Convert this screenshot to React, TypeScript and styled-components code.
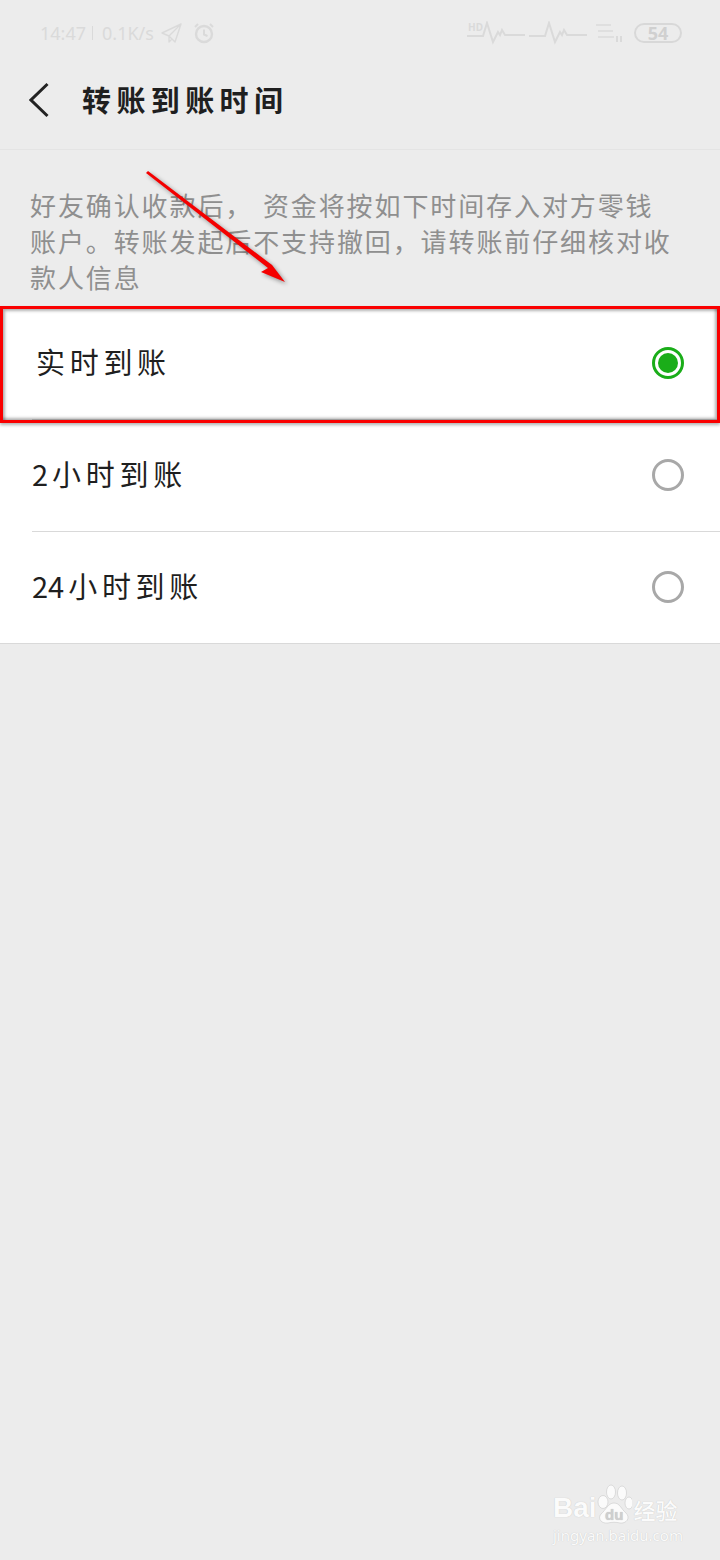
import React from 'react';
import styled, { createGlobalStyle } from 'styled-components';

const GlobalStyle = createGlobalStyle`
  html, body {
    margin: 0;
    padding: 0;
    background: #ececec;
  }
`;

const Page = styled.div`
  position: relative;
  width: 720px;
  height: 1560px;
  overflow: hidden;
  background: #ececec;
  font-family: "Noto Sans CJK SC", "Noto Sans", sans-serif;
`;

const StatusBar = styled.div`
  height: 66px;
  box-sizing: border-box;
  padding: 0 38px 0 40px;
  display: flex;
  align-items: center;
  justify-content: space-between;
  color: #dadada;
  font-family: "Noto Sans", sans-serif;
  font-size: 18px;
`;

const StatusGroup = styled.div`
  display: flex;
  align-items: center;
`;

const StatusText = styled.span`
  white-space: pre;
`;

const StatusSeparator = styled.span`
  width: 1px;
  height: 14px;
  margin: 0 9px 0 6px;
  background: #dadada;
`;

const IconSlot = styled.svg<{ $gap?: number; $start?: number }>`
  display: block;
  margin-left: ${(p) => p.$start ?? 0}px;
  margin-right: ${(p) => p.$gap ?? 0}px;
  fill: none;
  stroke: #dadada;
  stroke-width: 2;
`;

const Battery = styled.div`
  width: 48px;
  height: 20px;
  box-sizing: border-box;
  margin-left: 9px;
  border: 2px solid #d8d8d8;
  border-radius: 10px;
  display: flex;
  align-items: center;
  justify-content: center;
  color: #d0d0d0;
  font-size: 18px;
  font-weight: 700;
  line-height: 1;
`;

const Header = styled.div`
  height: 84px;
  box-sizing: border-box;
  display: flex;
  align-items: center;
  padding: 0 0 16px 29px;
  border-bottom: 1px solid #e4e4e4;
`;

const Title = styled.h1`
  margin: 0 0 2px 33px;
  font-size: 29px;
  font-weight: 700;
  letter-spacing: 5.4px;
  line-height: 36px;
  color: #1f1f1f;
`;

const Description = styled.p`
  height: 157px;
  box-sizing: border-box;
  margin: 0;
  padding: 37px 45px 0 30px;
  font-size: 26px;
  letter-spacing: 1.9px;
  word-spacing: 2px;
  line-height: 36px;
  color: #8f8f8f;
`;

const OptionList = styled.div`
  background: #fff;
  border-bottom: 1px solid #d9d9d9;
`;

const OptionRow = styled.div<{ $inset: number }>`
  height: 112px;
  box-sizing: border-box;
  padding: 0 36px 0 ${(p) => p.$inset}px;
  display: flex;
  align-items: center;
  justify-content: space-between;
  color: #1f1f1f;
`;

const OptionLabel = styled.span`
  margin-bottom: 4px;
  font-size: 29px;
  letter-spacing: 4.7px;
`;

const Digits = styled.span`
  margin-right: 4px;
  letter-spacing: 0;
`;

const Divider = styled.div`
  height: 1px;
  margin: 0 0 -1px 32px;
  position: relative;
  background: #d9d9d9;
`;

const Radio = styled.span<{ $checked?: boolean }>`
  width: 32px;
  height: 32px;
  box-sizing: border-box;
  border-radius: 50%;
  border: 3px solid ${(p) => (p.$checked ? '#1aad19' : '#a8a8a8')};
  display: flex;
  align-items: center;
  justify-content: center;

  &::after {
    content: '';
    display: ${(p) => (p.$checked ? 'block' : 'none')};
    width: 20px;
    height: 20px;
    border-radius: 50%;
    background: #1aad19;
  }
`;

// annotation drawn over the screenshot
const Highlight = styled.div`
  position: absolute;
  left: 0;
  right: 0;
  top: 306px;
  height: 117px;
  box-sizing: border-box;
  border: 3px solid #fa0000;
  box-shadow: 0 2px 3px rgba(0, 0, 0, 0.3), inset 2px 2px 3px rgba(0, 0, 0, 0.3),
    inset -2px -2px 3px rgba(0, 0, 0, 0.3);
`;

const ArrowOverlay = styled.svg`
  position: absolute;
  left: 0;
  top: 0;
  filter: drop-shadow(2px 2px 2px rgba(0, 0, 0, 0.4));
`;

const Watermark = styled.div`
  position: absolute;
  left: 553px;
  top: 1482px;
  width: 130px;
  color: #fbfbfb;
  text-shadow: 0 0 1px #bdbdbd;
`;

const WatermarkLogo = styled.div`
  display: flex;
  align-items: flex-end;
  height: 42px;
  font-family: "Liberation Sans", sans-serif;
  font-size: 28px;
  font-weight: 700;
  line-height: 32px;
`;

const WatermarkCn = styled.span`
  margin-left: 2px;
  font-family: "Noto Sans CJK SC", sans-serif;
  font-size: 22px;
  font-weight: 500;
  line-height: 30px;
`;

const WatermarkUrl = styled.div`
  margin-top: 1px;
  font-family: "Noto Sans", sans-serif;
  font-size: 15px;
  line-height: 20px;
  white-space: nowrap;
`;

const PawSvg = styled.svg`
  display: block;
  margin: 0 0 -1px -1px;
  fill: #fbfbfb;
  stroke: #c9c9c9;
  stroke-width: 0.6;
`;

const WAVE = 'M0 15H16L20 2L26 21L31 11L33 14L35 9L38 14H58';

const options = [
  { digits: '', label: '实时到账', inset: 36, checked: true },
  { digits: '2', label: '小时到账', inset: 32 },
  { digits: '24', label: '小时到账', inset: 32 },
];

const App: React.FC = () => {
  return (
    <Page>
      <GlobalStyle />
      <StatusBar>
        <StatusGroup>
          <StatusText>14:47</StatusText>
          <StatusSeparator />
          <StatusText>0.1K/s</StatusText>
          <IconSlot width="22" height="22" viewBox="0 0 22 22" $start={7} $gap={10}>
            <path d="M20 2L1 11L8 14L14 20L20 2ZM20 2L8 14V20L11 17" strokeLinejoin="round" strokeWidth="1.4" />
          </IconSlot>
          <IconSlot width="22" height="22" viewBox="0 0 22 22">
            <circle cx="11" cy="12" r="8" strokeWidth="2.4" />
            <path d="M11 7.5V12.5L14.5 14M2 5L5 2M20 5L17 2" strokeWidth="2" />
          </IconSlot>
        </StatusGroup>
        <StatusGroup>
          <IconSlot width="60" height="24" viewBox="0 0 60 24" $gap={2}>
            <path d={WAVE} />
            <text x="1" y="10" fontSize="10" fontWeight="700" fill="#dadada" stroke="none">HD</text>
          </IconSlot>
          <IconSlot width="60" height="24" viewBox="0 0 60 24" $gap={6}>
            <path d={WAVE} />
          </IconSlot>
          <IconSlot width="30" height="24" viewBox="0 0 30 24">
            <path d="M1 4H16M3 10H18M3 16H19" strokeWidth="1.6" />
            <path d="M22 15V21M26 15V21" strokeWidth="2" />
          </IconSlot>
          <Battery>54</Battery>
        </StatusGroup>
      </StatusBar>

      <Header>
        <svg width="20" height="36" viewBox="0 0 20 36" fill="none" stroke="#222" strokeWidth="3">
          <path d="M18.5 2L2 18L18.5 34" />
        </svg>
        <Title>转账到账时间</Title>
      </Header>

      <Description>好友确认收款后， 资金将按如下时间存入对方零钱账户。转账发起后不支持撤回，请转账前仔细核对收款人信息</Description>

      <OptionList>
        {options.map((option, i) => (
          <React.Fragment key={option.digits + option.label}>
            <OptionRow $inset={option.inset}>
              <OptionLabel>
                {option.digits && <Digits>{option.digits}</Digits>}
                {option.label}
              </OptionLabel>
              <Radio $checked={option.checked} />
            </OptionRow>
            {i < options.length - 1 && <Divider />}
          </React.Fragment>
        ))}
      </OptionList>

      <Highlight />

      <ArrowOverlay width="720" height="320" viewBox="0 0 720 320">
        <polygon points="146,173 148,171 272,265 269,261 285,282 261,272 268,268" fill="#f40000" />
      </ArrowOverlay>

      <Watermark>
        <WatermarkLogo>
          Bai
          <PawSvg width="36" height="42" viewBox="0 0 36 42">
            <ellipse cx="7" cy="19" rx="5" ry="6.5" />
            <ellipse cx="15" cy="9" rx="4.5" ry="7" />
            <ellipse cx="26" cy="10" rx="4.5" ry="7" />
            <ellipse cx="33" cy="20" rx="4" ry="6" />
            <path d="M18 20C24 20 25 26 30 30C35 35 30 41 24 40C20 39 16 39 12 40C6 41 1 36 5 31C10 27 12 20 18 20Z" />
            <text x="9" y="37" fontSize="15" fontWeight="700" fill="#cfcfcf" stroke="none">du</text>
          </PawSvg>
          <WatermarkCn>经验</WatermarkCn>
        </WatermarkLogo>
        <WatermarkUrl>jingyan.baidu.com</WatermarkUrl>
      </Watermark>
    </Page>
  );
};

export default App;
